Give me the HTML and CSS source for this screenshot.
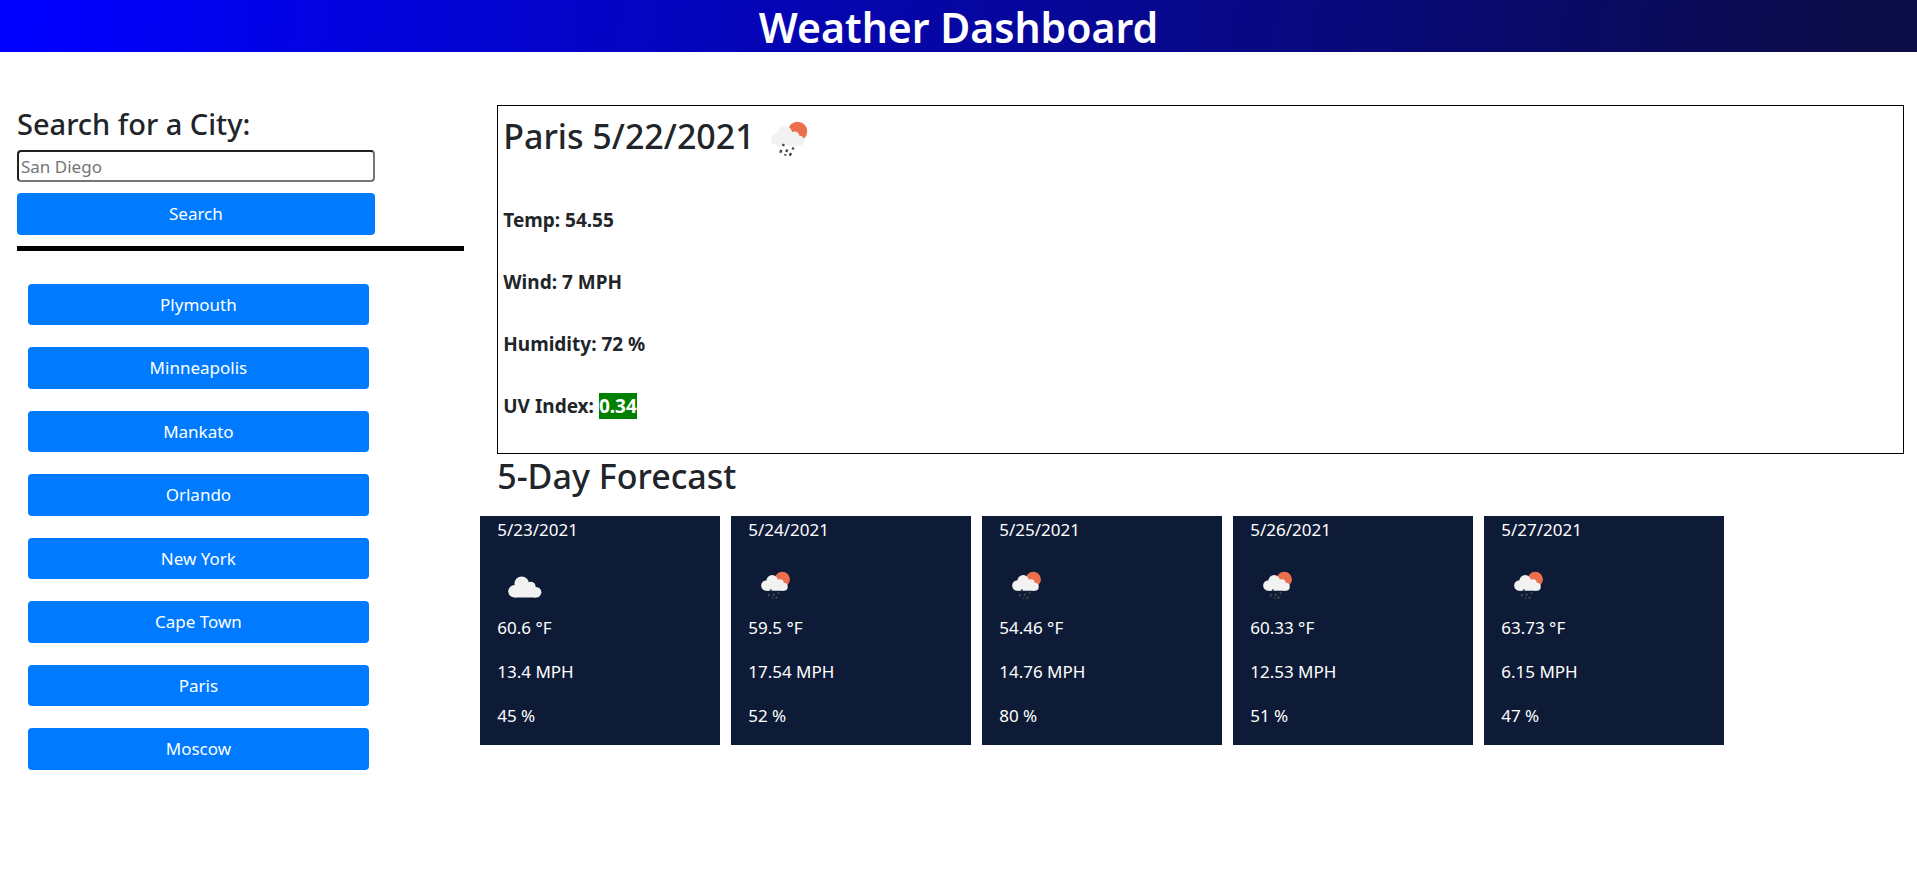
FILE: index.html
```html
<!DOCTYPE html>
<html lang="en">
<head>
<meta charset="utf-8">
<title>Weather Dashboard</title>
<link rel="stylesheet" href="styles.css">
</head>
<body>
<svg class="symbols" aria-hidden="true">
  <symbol id="cloud" viewBox="0 0 50 50">
    <g fill="#f2f2f2">
      <circle cx="13" cy="29.500" r="6.500"/>
      <circle cx="20.500" cy="21.500" r="7.500"/>
      <circle cx="30" cy="24.500" r="5"/>
      <circle cx="35.500" cy="30.500" r="5.500"/>
      <path d="M13 36V28l8-8 9 4 5.500 4v8z"/>
    </g>
  </symbol>
  <symbol id="rain" viewBox="0 0 50 50">
    <circle cx="30.500" cy="17" r="8" fill="#ec6e4c"/>
    <g fill="#f2f2f2">
      <circle cx="14" cy="23.500" r="5.500"/>
      <circle cx="20" cy="18.500" r="6"/>
      <circle cx="28" cy="21" r="4"/>
      <circle cx="32" cy="24.800" r="4.200"/>
      <path d="M14 29v-8l7-4 7 3 4 2v7z"/>
    </g>
    <path class="drops" d="M19 27.500l-.7 1.800M17 32.500l-1 2.200M22 32l-1 2.200M27 30.500l-.7 1.500M20.500 36l-.5 1.200M25 35l-1 2.200"/>
  </symbol>
</svg>
<header class="banner"><h1>Weather Dashboard</h1></header>
<main class="layout">
  <aside class="sidebar">
    <form class="search">
      <label class="search-label" for="city">Search for a City:</label>
      <input class="search-input" id="city" type="text" placeholder="San Diego">
      <button class="btn" type="button">Search</button>
    </form>
    <hr class="divider">
    <div class="history">
      <button class="btn" type="button">Plymouth</button>
      <button class="btn" type="button">Minneapolis</button>
      <button class="btn" type="button">Mankato</button>
      <button class="btn" type="button">Orlando</button>
      <button class="btn" type="button">New York</button>
      <button class="btn" type="button">Cape Town</button>
      <button class="btn" type="button">Paris</button>
      <button class="btn" type="button">Moscow</button>
    </div>
  </aside>
  <div class="content">
    <section class="current">
      <h2 class="current-title">Paris 5/22/2021 <svg class="icon-current" role="img" aria-label="Rain"><use href="#rain"/></svg></h2>
      <p class="stat">Temp: 54.55</p>
      <p class="stat">Wind: 7 MPH</p>
      <p class="stat">Humidity: 72 %</p>
      <p class="stat">UV Index: <span class="uv">0.34</span></p>
    </section>
    <h2 class="forecast-title">5-Day Forecast</h2>
    <section class="forecast">
      <article class="day"><p>5/23/2021</p><svg class="icon" role="img" aria-label="Clouds"><use href="#cloud"/></svg><p>60.6 °F</p><p>13.4 MPH</p><p>45 %</p></article>
      <article class="day"><p>5/24/2021</p><svg class="icon" role="img" aria-label="Rain"><use href="#rain"/></svg><p>59.5 °F</p><p>17.54 MPH</p><p>52 %</p></article>
      <article class="day"><p>5/25/2021</p><svg class="icon" role="img" aria-label="Rain"><use href="#rain"/></svg><p>54.46 °F</p><p>14.76 MPH</p><p>80 %</p></article>
      <article class="day"><p>5/26/2021</p><svg class="icon" role="img" aria-label="Rain"><use href="#rain"/></svg><p>60.33 °F</p><p>12.53 MPH</p><p>51 %</p></article>
      <article class="day"><p>5/27/2021</p><svg class="icon" role="img" aria-label="Rain"><use href="#rain"/></svg><p>63.73 °F</p><p>6.15 MPH</p><p>47 %</p></article>
    </section>
  </div>
</main>
</body>
</html>
```
FILE: styles.css
```css
* { box-sizing: border-box; }

body {
  margin: 0;
  background: #fff;
  color: #212529;
  font-family: "Segoe UI", "Noto Sans", sans-serif;
  font-size: 17px;
  line-height: 1.5;
}

h1, h2, p { margin: 0; }

.symbols { position: absolute; width: 0; height: 0; }

.banner {
  margin-bottom: 53px;
  background: linear-gradient(100deg, #00f 2%, #0c0c46 98%);
  color: #fff;
  text-align: center;
}

.banner h1 { padding-top: 2px; font-size: 41px; font-weight: 600; line-height: 50px; }

.layout { display: grid; grid-template-columns: calc(25% + 1px) 1fr; }

.sidebar { padding: 0 16px 0 17px; }

.search {
  display: flex;
  flex-direction: column;
  width: 80%;
}

.search-label { margin-bottom: 7px; font-size: 29px; font-weight: 500; line-height: 38px; }

.search-input {
  height: 32px;
  margin-bottom: 11px;
  padding: 1px 2px;
  border: 2px inset #767676;
  border-radius: 4px;
  background: #fff;
  color: #212529;
  font: inherit;
}

.search-input::placeholder { color: #757575; }

.btn {
  padding: 8px 12px;
  border: 0;
  border-radius: 4px;
  background: #007bff;
  color: #fff;
  font: inherit;
  text-align: center;
}

.divider { margin: 11px 0 33px; border: 0; border-top: 5px solid #000; }

.history {
  display: grid;
  gap: 22px;
  width: 80%;
  padding: 0 6px 0 11px;
}

.content { padding-right: 13px; }

.current {
  margin-left: 17px;
  padding: 5px 5px 33px;
  border: 1px solid #000;
}

.current-title {
  display: flex;
  align-items: flex-start;
  margin-bottom: 35px;
  font-size: 34px;
  font-weight: 500;
  line-height: 50px;
}

.stat { font-size: 19px; font-weight: 700; line-height: 28px; }
.stat + .stat { margin-top: 34px; }

.uv { background: green; color: #fff; }

.icon { display: block; width: 48px; height: 48px; margin: 20px 0 3px 5px; }
.icon-current { width: 60px; height: 60px; margin-left: 6px; }

.drops { fill: none; stroke: #484848; stroke-width: 2; }

.forecast-title { margin: 0 0 18px 17px; font-size: 34px; font-weight: 500; line-height: 44px; }

.forecast { display: flex; flex-wrap: wrap; gap: 11px; }

.day {
  width: 240px;
  padding: 0 17px 16px;
  background: #0e1b37;
  color: #fff;
}

.day p { line-height: 27px; }
.day p + p { margin-top: 17px; }
```
